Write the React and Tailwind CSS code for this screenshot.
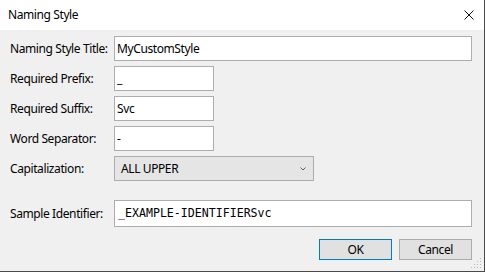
import { useState } from "react";

const font = { fontFamily: '"Noto Sans", "Open Sans", sans-serif' };

function Field({ label, children }) {
  return (
    <div className="flex items-center h-[25px]">
      <label className="w-[104px] shrink-0 whitespace-nowrap text-[12px] tracking-[-0.4px] text-black">{label}</label>
      {children}
    </div>
  );
}

function ResizeGrip() {
  const dots = [
    [10, 2],
    [7, 5], [10, 5],
    [4, 8], [7, 8], [10, 8],
    [1, 11], [4, 11], [7, 11], [10, 11],
  ];
  return (
    <svg width="12" height="13" viewBox="0 0 12 13" className="absolute right-[2px] bottom-[2px]">
      {dots.map(([x, y], i) => (
        <rect key={i} x={x} y={y} width="1" height="1" fill="#b8b8b8" />
      ))}
    </svg>
  );
}

export default function App() {
  const [title, setTitle] = useState("MyCustomStyle");
  const [prefix, setPrefix] = useState("_");
  const [suffix, setSuffix] = useState("Svc");
  const [sep, setSep] = useState("-");

  const input =
    "h-[25px] border border-[#adadad] bg-white px-[2px] text-[12px] tracking-[-0.4px] text-black outline-none";

  return (
    <div className="w-[485px] h-[272px] bg-[#4a4a4a]" style={font}>
      <div className="relative w-[484px] h-[271px] bg-[#f0f0f0] flex flex-col">
        {/* Title bar */}
        <div className="h-[30px] bg-white flex items-center justify-between pl-[8px] pr-[10px]">
          <span className="text-[12px] tracking-[-0.4px] text-black">Naming Style</span>
          <svg width="10" height="10" viewBox="0 0 10 10">
            <path d="M0.5 0.5 L9.5 9.5 M9.5 0.5 L0.5 9.5" stroke="#111" strokeWidth="1" />
          </svg>
        </div>

        {/* Form */}
        <div className="flex flex-col gap-[5px] pt-[6px] pl-[10px]">
          <Field label="Naming Style Title:">
            <input className={`${input} w-[358px]`} value={title} onChange={(e) => setTitle(e.target.value)} />
          </Field>
          <Field label="Required Prefix:">
            <input className={`${input} w-[100px]`} value={prefix} onChange={(e) => setPrefix(e.target.value)} />
          </Field>
          <Field label="Required Suffix:">
            <input className={`${input} w-[100px]`} value={suffix} onChange={(e) => setSuffix(e.target.value)} />
          </Field>
          <Field label="Word Separator:">
            <input className={`${input} w-[100px] border-[#5a9de6]`} value={sep} onChange={(e) => setSep(e.target.value)} />
          </Field>
          <Field label="Capitalization:">
            <div className="w-[200px] h-[25px] border border-[#acacac] bg-[#e5e5e5] flex items-center justify-between pl-[6px] pr-[7px]">
              <span className="text-[12px] tracking-[-0.4px] text-black">ALL UPPER</span>
              <svg width="6" height="4" viewBox="0 0 6 4">
                <path d="M0.5 0.5 L3 3 L5.5 0.5" stroke="#606060" strokeWidth="1" fill="none" />
              </svg>
            </div>
          </Field>
        </div>

        <div className="flex items-center pl-[10px] mt-[19px] h-[27px]">
          <label className="w-[104px] shrink-0 whitespace-nowrap text-[12px] tracking-[-0.4px] text-black">Sample Identifier:</label>
          <div className="w-[358px] h-[27px] border border-[#adadad] bg-white flex items-center px-[3px]">
            <span className="text-[11.6px] text-black" style={{ fontFamily: '"DejaVu Sans Mono", monospace' }}>
              _EXAMPLE-IDENTIFIERSvc
            </span>
          </div>
        </div>

        {/* Buttons */}
        <div className="flex justify-end gap-[7px] pr-[12px] mt-[12px]">
          <button className="w-[73px] h-[21px] border border-[#0078d7] bg-[#e1e1e1] text-[12px] tracking-[-0.4px] text-black">OK</button>
          <button className="w-[73px] h-[21px] border border-[#adadad] bg-[#e1e1e1] text-[12px] tracking-[-0.4px] text-black">Cancel</button>
        </div>

        <ResizeGrip />
      </div>
    </div>
  );
}
